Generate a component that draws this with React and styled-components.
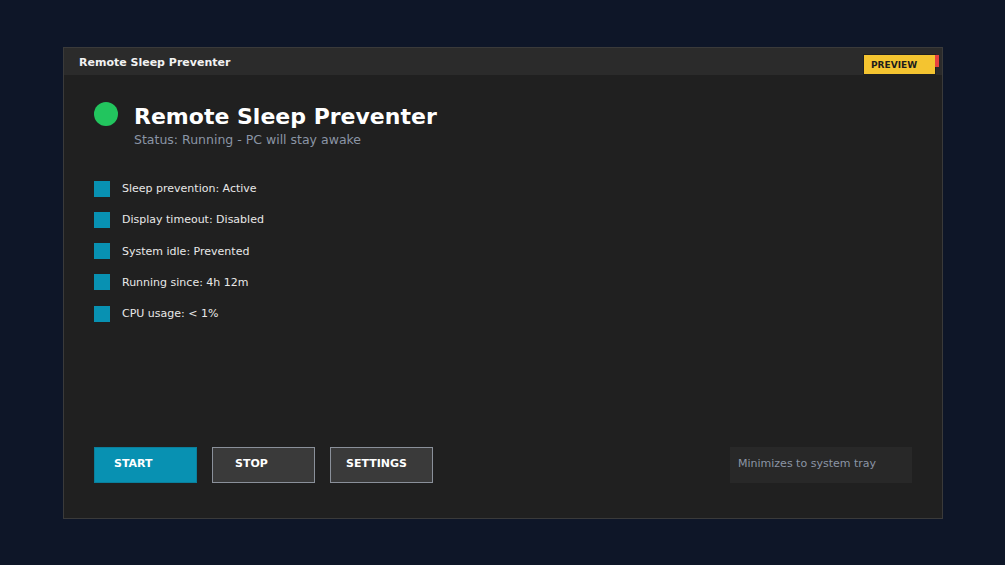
import React from "react";
import styled, { createGlobalStyle } from "styled-components";

const Global = createGlobalStyle`
  html, body { margin: 0; padding: 0; }
  body {
    background: #0e1628;
    font-family: "DejaVu Sans", "Liberation Sans", sans-serif;
    width: 1005px;
    height: 565px;
    overflow: hidden;
  }
`;

const Stage = styled.div`
  width: 1005px;
  height: 565px;
  display: flex;
  align-items: center;
  justify-content: center;
`;

const Window = styled.div`
  position: relative;
  width: 880px;
  height: 472px;
  box-sizing: border-box;
  border: 1px solid #3a3a3a;
  background: #202020;
  display: flex;
  flex-direction: column;
  margin-left: 1px;
`;

const TitleBar = styled.div`
  height: 27px;
  box-sizing: border-box;
  background: #2b2b2b;
  display: flex;
  align-items: center;
  padding: 3px 0 0 15px;
  font-size: 11px;
  font-weight: bold;
  color: #f2f2f2;
`;

const Badge = styled.div`
  position: absolute;
  top: 7px;
  right: 7px;
  width: 71px;
  height: 19px;
  background: #f4c430;
  color: #1c1c1c;
  font-size: 9px;
  font-weight: bold;
  display: flex;
  align-items: center;
  padding: 1px 0 0 7px;
  box-sizing: border-box;
  box-shadow: 0 0 0 1px rgba(0,0,0,0.25);
  &::after {
    content: "";
    position: absolute;
    top: 0;
    right: -4px;
    width: 4px;
    height: 12px;
    background: #e8423f;
  }
`;

const Body = styled.div`
  flex: 1;
  display: flex;
  flex-direction: column;
  padding: 27px 30px 35px 30px;
`;

const Header = styled.div`
  display: flex;
  align-items: flex-start;
  gap: 16px;
`;

const Dot = styled.div`
  width: 24px;
  height: 24px;
  border-radius: 50%;
  background: #22c55e;
  flex-shrink: 0;
`;

const Titles = styled.div`
  display: flex;
  flex-direction: column;
`;

const Heading = styled.h1`
  margin: 2px 0 0 0;
  font-size: 22px;
  line-height: 26px;
  font-weight: bold;
  color: #ffffff;
`;

const Subtitle = styled.div`
  font-size: 12.5px;
  line-height: 16px;
  color: #8b95a5;
  margin-top: 2px;
`;

const List = styled.div`
  display: flex;
  flex-direction: column;
  gap: 15.3px;
  margin-top: 33px;
`;

const Item = styled.div`
  display: flex;
  align-items: center;
  gap: 12px;
  height: 16px;
  font-size: 11px;
  color: #e8e8e8;
`;

const Square = styled.span`
  width: 16px;
  height: 16px;
  background: #0891b2;
  flex-shrink: 0;
`;

const Footer = styled.div`
  margin-top: auto;
  display: flex;
  align-items: center;
`;

const Buttons = styled.div`
  display: flex;
  gap: 15px;
`;

const Button = styled.button`
  width: 103px;
  height: 36px;
  box-sizing: border-box;
  padding: 0 0 3px ${(p) => p.$pad}px;
  text-align: left;
  font-family: "DejaVu Sans", "Liberation Sans", sans-serif;
  font-size: 11px;
  font-weight: bold;
  color: #ffffff;
  background: ${(p) => (p.$primary ? "#0891b2" : "#3a3a3a")};
  border: 1px solid ${(p) => (p.$primary ? "#0a7f9c" : "#8a909a")};
  cursor: pointer;
`;

const Note = styled.div`
  margin-left: auto;
  width: 182px;
  height: 36px;
  box-sizing: border-box;
  background: #282828;
  color: #8b95a5;
  font-size: 11px;
  display: flex;
  align-items: center;
  padding: 0 0 3px 8px;
`;

const items = [
  "Sleep prevention: Active",
  "Display timeout: Disabled",
  "System idle: Prevented",
  "Running since: 4h 12m",
  "CPU usage: < 1%",
];

export default function App() {
  return (
    <>
      <Global />
      <Stage>
        <Window>
          <TitleBar>Remote Sleep Preventer</TitleBar>
          <Badge>PREVIEW</Badge>
          <Body>
            <Header>
              <Dot />
              <Titles>
                <Heading>Remote Sleep Preventer</Heading>
                <Subtitle>Status: Running - PC will stay awake</Subtitle>
              </Titles>
            </Header>
            <List>
              {items.map((t) => (
                <Item key={t}>
                  <Square />
                  {t}
                </Item>
              ))}
            </List>
            <Footer>
              <Buttons>
                <Button $primary $pad={19}>START</Button>
                <Button $pad={22}>STOP</Button>
                <Button $pad={15}>SETTINGS</Button>
              </Buttons>
              <Note>Minimizes to system tray</Note>
            </Footer>
          </Body>
        </Window>
      </Stage>
    </>
  );
}
